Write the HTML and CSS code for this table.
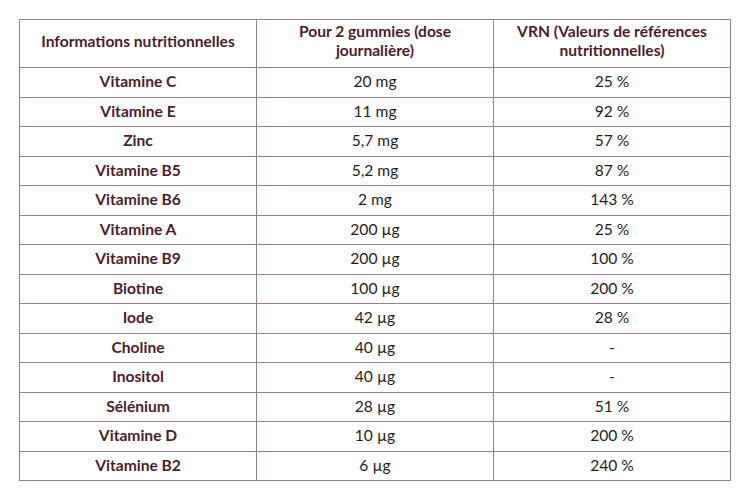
FILE: index.html
```html
<!DOCTYPE html>
<html lang="fr">
<head>
<meta charset="utf-8">
<link rel="stylesheet" href="styles.css">
</head>
<body>
<table class="nutri">
  <thead>
    <tr>
      <th>Informations nutritionnelles</th>
      <th>Pour 2 gummies (dose<br>journalière)</th>
      <th>VRN (Valeurs de références<br>nutritionnelles)</th>
    </tr>
  </thead>
  <tbody>
    <tr><td class="name">Vitamine C</td><td>20 mg</td><td>25 %</td></tr>
    <tr><td class="name">Vitamine E</td><td>11 mg</td><td>92 %</td></tr>
    <tr><td class="name">Zinc</td><td>5,7 mg</td><td>57 %</td></tr>
    <tr><td class="name">Vitamine B5</td><td>5,2 mg</td><td>87 %</td></tr>
    <tr><td class="name">Vitamine B6</td><td>2 mg</td><td>143 %</td></tr>
    <tr><td class="name">Vitamine A</td><td>200 µg</td><td>25 %</td></tr>
    <tr><td class="name">Vitamine B9</td><td>200 µg</td><td>100 %</td></tr>
    <tr><td class="name">Biotine</td><td>100 µg</td><td>200 %</td></tr>
    <tr><td class="name">Iode</td><td>42 µg</td><td>28 %</td></tr>
    <tr><td class="name">Choline</td><td>40 µg</td><td>-</td></tr>
    <tr><td class="name">Inositol</td><td>40 µg</td><td>-</td></tr>
    <tr><td class="name">Sélénium</td><td>28 µg</td><td>51 %</td></tr>
    <tr><td class="name">Vitamine D</td><td>10 µg</td><td>200 %</td></tr>
    <tr><td class="name">Vitamine B2</td><td>6 µg</td><td>240 %</td></tr>
  </tbody>
</table>
</body>
</html>
```
FILE: styles.css
```css
html, body {
  margin: 0;
  padding: 0;
  background: #ffffff;
}
body {
  padding: 19px 0 0 19px;
  font-family: Lato, "Liberation Sans", sans-serif;
  font-size: 15.6px;
}
.nutri {
  border-collapse: collapse;
  width: 712px;
  table-layout: fixed;
}
.nutri th,
.nutri td {
  border: 1px solid #9a8088;
  text-align: center;
  vertical-align: middle;
  line-height: 18px;
}
.nutri th {
  height: 40px;
  padding: 1px 4px 6px;
  line-height: 19px;
  font-weight: bold;
  color: #4a1d2d;
}
.nutri td {
  height: 26.5px;
  padding: 0 4px 2px;
  color: #1e1e1e;
}
.nutri td.name {
  font-weight: bold;
  color: #4a1d2d;
}
```
